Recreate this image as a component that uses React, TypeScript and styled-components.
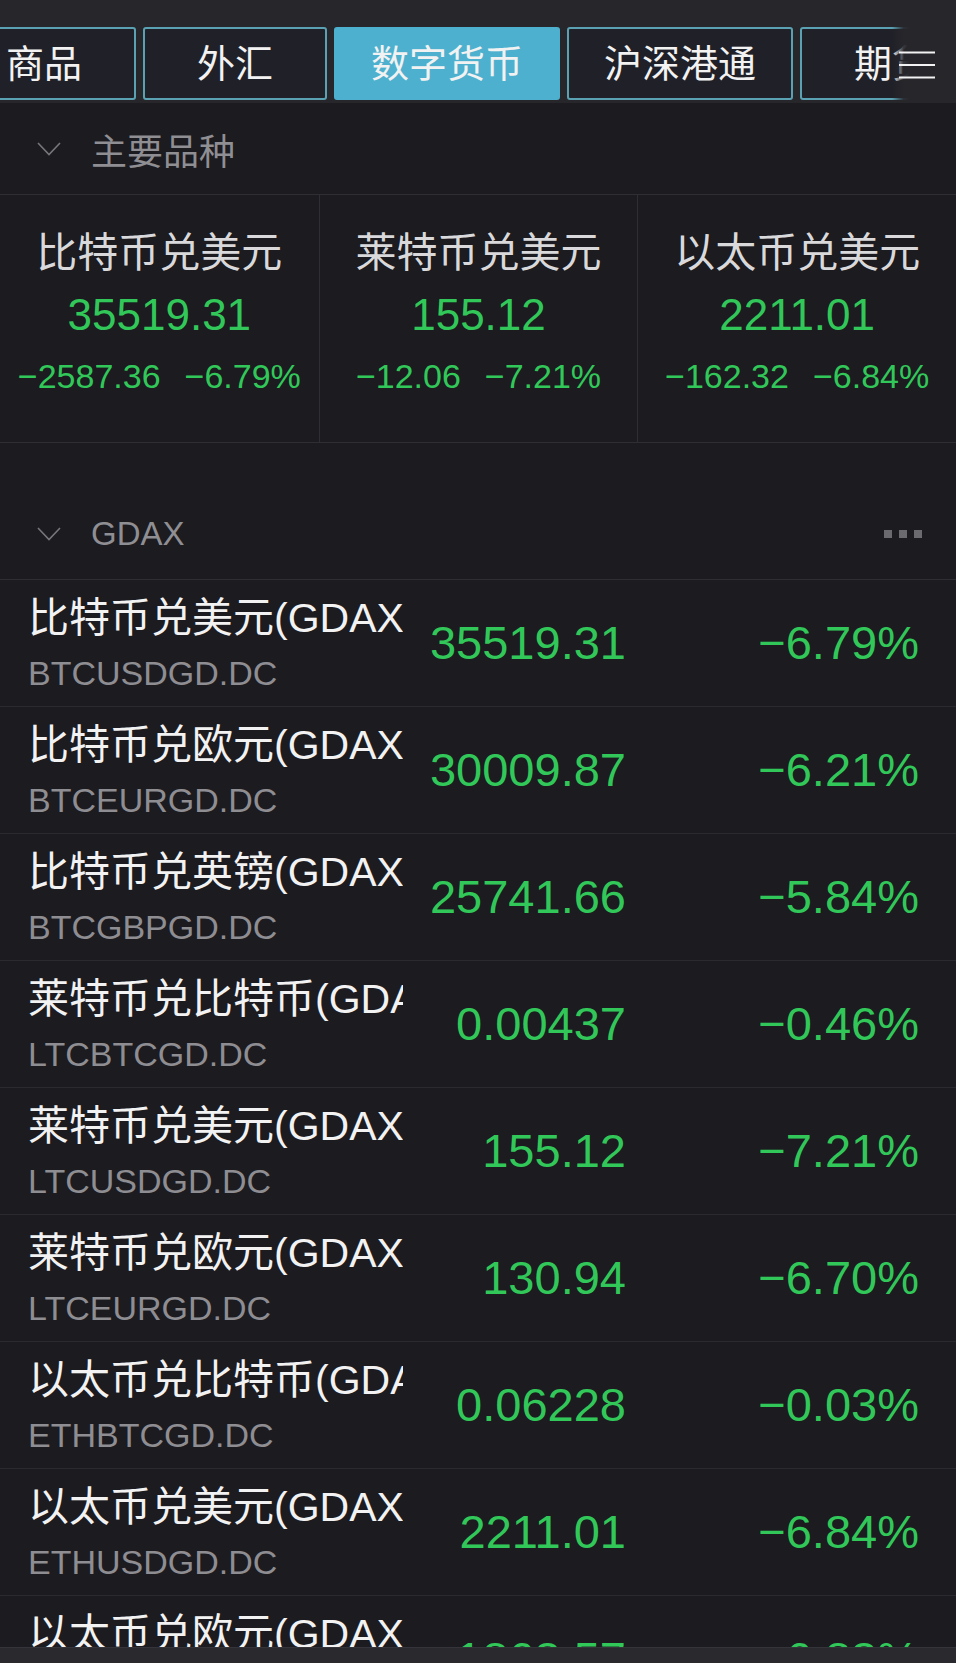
import styled, { createGlobalStyle } from "styled-components";

const GlobalStyle = createGlobalStyle`
  body {
    margin: 0;
    background: #1c1b20;
    font-family: "Liberation Sans", "Noto Sans CJK SC", sans-serif;
  }
`;

const tabs = ["商品", "外汇", "数字货币", "沪深港通", "期货"];
const activeTab = 2;

const majors = [
  { name: "比特币兑美元", price: "35519.31", change: "−2587.36", pct: "−6.79%" },
  { name: "莱特币兑美元", price: "155.12", change: "−12.06", pct: "−7.21%" },
  { name: "以太币兑美元", price: "2211.01", change: "−162.32", pct: "−6.84%" },
];

const quotes = [
  { name: "比特币兑美元(GDAX)", code: "BTCUSDGD.DC", price: "35519.31", pct: "−6.79%" },
  { name: "比特币兑欧元(GDAX)", code: "BTCEURGD.DC", price: "30009.87", pct: "−6.21%" },
  { name: "比特币兑英镑(GDAX)", code: "BTCGBPGD.DC", price: "25741.66", pct: "−5.84%" },
  { name: "莱特币兑比特币(GDAX)", code: "LTCBTCGD.DC", price: "0.00437", pct: "−0.46%" },
  { name: "莱特币兑美元(GDAX)", code: "LTCUSDGD.DC", price: "155.12", pct: "−7.21%" },
  { name: "莱特币兑欧元(GDAX)", code: "LTCEURGD.DC", price: "130.94", pct: "−6.70%" },
  { name: "以太币兑比特币(GDAX)", code: "ETHBTCGD.DC", price: "0.06228", pct: "−0.03%" },
  { name: "以太币兑美元(GDAX)", code: "ETHUSDGD.DC", price: "2211.01", pct: "−6.84%" },
  { name: "以太币兑欧元(GDAX)", code: "ETHEURGD.DC", price: "1863.57", pct: "−6.83%" },
];

const Page = styled.div`
  height: 1663px;
  display: flex;
  flex-direction: column;
  overflow: hidden;
`;

const Content = styled.main`
  flex: 1;
  overflow: hidden;
`;

const TopBar = styled.header`
  position: relative;
  height: 103px;
  box-sizing: border-box;
  padding-top: 27px;
  background: #27262b;
  overflow: hidden;
`;

const TabStrip = styled.nav`
  display: flex;
  gap: 7px;
  margin-left: -48px;
`;

const Tab = styled.div<{ $active?: boolean }>`
  flex-shrink: 0;
  min-width: 184px;
  height: 73px;
  box-sizing: border-box;
  padding: 0 35px 7px;
  display: flex;
  align-items: center;
  justify-content: center;
  border: 2px solid ${(p) => (p.$active ? "#4cb0ce" : "#5aa2b3")};
  border-radius: 3px;
  background: ${(p) => (p.$active ? "#4cb0ce" : "#202128")};
  color: #f2f2f2;
  font-family: "Noto Sans CJK SC", sans-serif;
  font-size: 38px;
  white-space: nowrap;
`;

const MenuFade = styled.div`
  position: absolute;
  top: 0;
  right: 0;
  width: 64px;
  height: 100%;
  display: flex;
  align-items: center;
  justify-content: flex-end;
  padding: 27px 21px 0 0;
  box-sizing: border-box;
  background: linear-gradient(
    to right,
    rgba(39, 38, 43, 0) 0%,
    rgba(39, 38, 43, 0.92) 18%,
    #27262b 28%
  );
`;

const SectionHeader = styled.div`
  height: 91px;
  display: flex;
  align-items: center;
  padding: 0 34px 0 37px;
  color: #8f8e93;
  border-bottom: 1px solid #2f2e34;
`;

const SectionTitle = styled.span<{ $latin?: boolean }>`
  margin-left: 30px;
  font-family: ${(p) =>
    p.$latin ? `"Liberation Sans", sans-serif` : `"Noto Sans CJK SC", sans-serif`};
  font-size: ${(p) => (p.$latin ? "33px" : "36px")};
  flex: 1;
`;

const Dots = styled.div`
  display: flex;
  gap: 7px;
  span {
    width: 8px;
    height: 8px;
    background: #6b6a6f;
  }
`;

const CardGrid = styled.section`
  display: grid;
  grid-template-columns: repeat(3, 1fr);
  height: 248px;
  box-sizing: border-box;
  border-bottom: 1px solid #2f2e34;
`;

const Card = styled.div`
  display: flex;
  flex-direction: column;
  align-items: center;
  padding-top: 29px;
  border-left: 1px solid #2f2e34;
  white-space: nowrap;
  &:first-child {
    border-left: none;
  }
`;

const CardTitle = styled.div`
  font-family: "Noto Sans CJK SC", sans-serif;
  font-size: 41px;
  line-height: 50px;
  color: #d9d9db;
`;

const CardPrice = styled.div`
  margin-top: 13px;
  font-size: 44px;
  line-height: 56px;
  color: #31c859;
`;

const CardChange = styled.div`
  margin-top: 13px;
  display: flex;
  gap: 24px;
  font-size: 34px;
  line-height: 40px;
  color: #31c859;
`;

const GdaxSection = styled.section`
  margin-top: 45px;
`;

const Row = styled.div`
  display: grid;
  grid-template-columns: 375px 223px 1fr;
  align-items: center;
  height: 127px;
  box-sizing: border-box;
  padding: 0 37px 0 28px;
  border-bottom: 1px solid #2b2a30;
`;

const NameCell = styled.div`
  display: flex;
  flex-direction: column;
  gap: 10px;
  overflow: hidden;
  white-space: nowrap;
  margin-top: -1px;
`;

const Name = styled.div`
  font-size: 41px;
  line-height: 50px;
  color: #f2f2f2;
`;

const Code = styled.div`
  font-size: 34px;
  line-height: 40px;
  color: #8e8d92;
`;

const Num = styled.div`
  text-align: right;
  font-size: 47px;
  line-height: 56px;
  color: #31c859;
  white-space: nowrap;
`;

const BottomBar = styled.footer`
  height: 16px;
  flex-shrink: 0;
  background: #2a292e;
  border-top: 1px solid #35343a;
  box-sizing: border-box;
`;

const Chevron = () => (
  <svg width="24" height="14" viewBox="0 0 24 14">
    <polyline
      points="1,1 12,12.5 23,1"
      fill="none"
      stroke="#77767b"
      strokeWidth="1.6"
    />
  </svg>
);

const MenuIcon = () => (
  <svg width="36" height="28" viewBox="0 0 36 28">
    <g stroke="#f2f2f2" strokeWidth="2">
      <line x1="0" y1="1.5" x2="36" y2="1.5" />
      <line x1="0" y1="14" x2="36" y2="14" />
      <line x1="0" y1="26.5" x2="36" y2="26.5" />
    </g>
  </svg>
);

export default function App() {
  return (
    <Page>
      <GlobalStyle />
      <Content>
        <TopBar>
          <TabStrip>
            {tabs.map((t, i) => (
              <Tab key={t} $active={i === activeTab}>
                {t}
              </Tab>
            ))}
          </TabStrip>
          <MenuFade>
            <MenuIcon />
          </MenuFade>
        </TopBar>

        <SectionHeader>
          <Chevron />
          <SectionTitle>主要品种</SectionTitle>
        </SectionHeader>
        <CardGrid>
          {majors.map((m) => (
            <Card key={m.name}>
              <CardTitle>{m.name}</CardTitle>
              <CardPrice>{m.price}</CardPrice>
              <CardChange>
                <span>{m.change}</span>
                <span>{m.pct}</span>
              </CardChange>
            </Card>
          ))}
        </CardGrid>

        <GdaxSection>
          <SectionHeader>
            <Chevron />
            <SectionTitle $latin>GDAX</SectionTitle>
            <Dots>
              <span />
              <span />
              <span />
            </Dots>
          </SectionHeader>
          {quotes.map((q) => (
            <Row key={q.code}>
              <NameCell>
                <Name>{q.name}</Name>
                <Code>{q.code}</Code>
              </NameCell>
              <Num>{q.price}</Num>
              <Num>{q.pct}</Num>
            </Row>
          ))}
        </GdaxSection>
      </Content>
      <BottomBar />
    </Page>
  );
}
